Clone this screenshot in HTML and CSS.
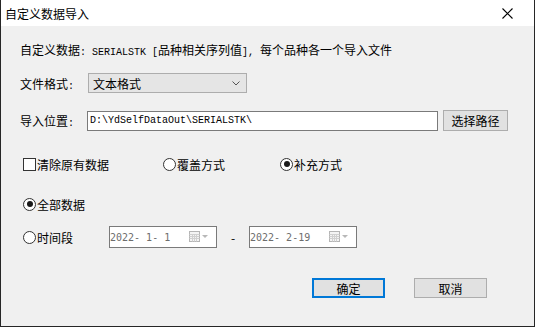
FILE: index.html
```html
<!DOCTYPE html>
<html lang="zh-CN">
<head>
    <meta charset="UTF-8">
    <title>自定义数据导入</title>
    <link rel="stylesheet" href="styles.css">
</head>
<body>
    <div class="window">
        <!-- Title bar -->
        <div class="titlebar">
            <span class="title">自定义数据导入</span>
            <svg class="close" width="11" height="11" viewBox="0 0 11 11">
                <path d="M0.5 0.5 L10.5 10.5 M10.5 0.5 L0.5 10.5" stroke="#000" stroke-width="1.1" fill="none"/>
            </svg>
        </div>

        <div class="content">
            <div class="intro">自定义数据<span class="mono">: SERIALSTK [</span>品种相关序列值<span class="mono">], </span>每个品种各一个导入文件</div>

            <div class="row row-format">
                <span class="label">文件格式<span class="mono">:</span></span>
                <div class="select">
                    <span>文本格式</span>
                    <svg width="8" height="5" viewBox="0 0 8 5">
                        <path d="M0.5 0.5 L4 4 L7.5 0.5" stroke="#555" fill="none"/>
                    </svg>
                </div>
            </div>

            <div class="row row-path">
                <span class="label">导入位置<span class="mono">:</span></span>
                <div class="input mono">D:\YdSelfDataOut\SERIALSTK\</div>
                <button class="btn btn-browse">选择路径</button>
            </div>

            <div class="row row-mode">
                <label class="opt opt-clear"><span class="check"></span>清除原有数据</label>
                <label class="opt opt-cover"><span class="radio"></span>覆盖方式</label>
                <label class="opt"><span class="radio checked"></span>补充方式</label>
            </div>

            <div class="row row-all">
                <label class="opt"><span class="radio checked"></span>全部数据</label>
            </div>

            <div class="row row-range">
                <label class="opt opt-range"><span class="radio"></span>时间段</label>
                <div class="date">
                    <span class="date-text">2022- 1- 1</span>
                    <svg class="cal" width="20" height="12" viewBox="0 0 20 12">
                        <rect x="0.5" y="0.5" width="10" height="10" fill="#f4f4f4" stroke="#b5b5b5"/>
                        <path d="M0.5 3.5 H10.5 M3.5 3.5 V10.5 M5.5 3.5 V10.5 M7.5 3.5 V10.5 M0.5 5.5 H10.5 M0.5 7.5 H10.5" stroke="#d0d0d0"/>
                        <path d="M13 4 H19 L16 7 Z" fill="#b8b8b8"/>
                    </svg>
                </div>
                <span class="dash">-</span>
                <div class="date">
                    <span class="date-text">2022- 2-19</span>
                    <svg class="cal" width="20" height="12" viewBox="0 0 20 12">
                        <rect x="0.5" y="0.5" width="10" height="10" fill="#f4f4f4" stroke="#b5b5b5"/>
                        <path d="M0.5 3.5 H10.5 M3.5 3.5 V10.5 M5.5 3.5 V10.5 M7.5 3.5 V10.5 M0.5 5.5 H10.5 M0.5 7.5 H10.5" stroke="#d0d0d0"/>
                        <path d="M13 4 H19 L16 7 Z" fill="#b8b8b8"/>
                    </svg>
                </div>
            </div>

            <div class="actions">
                <button class="btn btn-ok">确定</button>
                <button class="btn btn-cancel">取消</button>
            </div>
        </div>
    </div>
</body>
</html>
```

FILE: styles.css
```css
/* General */
* {
    box-sizing: border-box;
}

body {
    margin: 0;
    font-family: "Noto Sans CJK SC", "Liberation Sans", sans-serif;
    font-size: 12px;
    color: #000;
    background: #f0f0f0;
}

.window {
    width: 535px;
    height: 327px;
    border: 1px solid #262626;
    border-top: none;
    background: #f0f0f0;
}

.mono {
    font-family: "Liberation Mono", monospace;
    font-size: 10px;
}

/* Title bar */
.titlebar {
    height: 26px;
    background: #fff;
    display: flex;
    align-items: center;
    justify-content: space-between;
    padding: 0 21px 0 4px;
}

.title {
    font-size: 12px;
}

/* Content */
.content {
    padding: 0 0 0 19px;
}

.intro {
    margin-top: 16px;
    height: 16px;
    line-height: 16px;
    white-space: nowrap;
}

.row {
    display: flex;
    align-items: center;
}

.label {
    width: 68px;
    flex-shrink: 0;
}

.row-format {
    margin-top: 15px;
    height: 20px;
}

.select {
    width: 159px;
    height: 20px;
    border: 1px solid #adadad;
    background: #e5e5e5;
    display: flex;
    align-items: center;
    justify-content: space-between;
    padding: 0 6px 0 4px;
}

.row-path {
    margin-top: 17px;
    height: 21px;
}

.input {
    width: 351px;
    height: 20px;
    line-height: 18px;
    border: 1px solid #7a7a7a;
    background: #fff;
    padding-left: 2px;
    margin-left: -1px;
}

.btn {
    font-family: "Noto Sans CJK SC", sans-serif;
    font-size: 12px;
    background: #e1e1e1;
    border: 1px solid #adadad;
    padding: 0;
    color: #000;
}

.btn-browse {
    margin-left: 5px;
    width: 65px;
    height: 21px;
}

/* Options */
.opt {
    display: flex;
    align-items: center;
    white-space: nowrap;
}

.row-mode {
    margin-top: 26px;
    height: 14px;
    padding-left: 3px;
}

.opt-clear {
    width: 140px;
}

.opt-cover {
    width: 117px;
}

.check {
    width: 13px;
    height: 13px;
    border: 1px solid #333;
    background: #fff;
    margin-right: 1px;
}

.radio {
    width: 13px;
    height: 13px;
    border: 1px solid #333;
    border-radius: 50%;
    background: #fff;
    margin-right: 1px;
    position: relative;
}

.radio.checked::after {
    content: "";
    position: absolute;
    left: 2.5px;
    top: 2.5px;
    width: 6px;
    height: 6px;
    border-radius: 50%;
    background: #1a1a1a;
}

.row-all {
    margin-top: 26px;
    height: 14px;
    padding-left: 3px;
}

.row-range {
    margin-top: 15px;
    height: 22px;
    padding-left: 3px;
}

.opt-range {
    width: 86px;
}

.date {
    width: 108px;
    height: 22px;
    border: 1px solid #7a7a7a;
    background: #fff;
    display: flex;
    align-items: center;
    justify-content: space-between;
    padding-right: 7px;
}

.date-text {
    font-family: "DejaVu Sans Mono", monospace;
    font-size: 10px;
    color: #6d6d6d;
    white-space: pre;
}

.dash {
    width: 32px;
    text-align: center;
}

/* Dialog buttons */
.actions {
    margin-top: 30px;
    display: flex;
    justify-content: flex-end;
    gap: 29px;
    padding-right: 47px;
}

.btn-ok,
.btn-cancel {
    width: 73px;
    height: 20px;
}

.btn-ok {
    border: 2px solid #0078d7;
}
```
